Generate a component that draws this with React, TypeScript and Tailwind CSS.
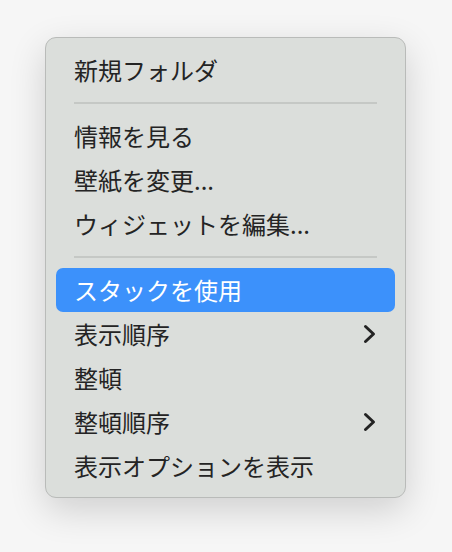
import React from 'react';

type Item =
  | { kind: 'item'; label: string; active?: boolean; submenu?: boolean }
  | { kind: 'sep' };

const items: Item[] = [
  { kind: 'item', label: '新規フォルダ' },
  { kind: 'sep' },
  { kind: 'item', label: '情報を見る' },
  { kind: 'item', label: '壁紙を変更...' },
  { kind: 'item', label: 'ウィジェットを編集...' },
  { kind: 'sep' },
  { kind: 'item', label: 'スタックを使用', active: true },
  { kind: 'item', label: '表示順序', submenu: true },
  { kind: 'item', label: '整頓' },
  { kind: 'item', label: '整頓順序', submenu: true },
  { kind: 'item', label: '表示オプションを表示' },
];

function Chevron() {
  return (
    <svg width="15" height="22" viewBox="0 0 15 22" fill="none">
      <path d="M3.5 3.5l8 7.5-8 7.5" stroke="#232323" strokeWidth="3" strokeLinecap="round" strokeLinejoin="round" />
    </svg>
  );
}

export default function App() {
  return (
    <div
      className="w-[452px] h-[552px] bg-[#f6f6f6] pt-[37px] pl-[45px]"
      style={{ fontFamily: '"Noto Sans CJK JP", "Noto Sans", sans-serif' }}
    >
      <div className="w-[361px] rounded-[11px] border border-[#b9bbb9] bg-[#dbdedb] px-[10px] pt-[10px] pb-[9px] shadow-[0_12px_36px_rgba(0,0,0,0.16)]">
        {items.map((it, i) =>
          it.kind === 'sep' ? (
            <div key={i} className="h-[22px] flex items-center px-[18px]">
              <div className="h-[2px] w-full bg-[#c5c8c5]" />
            </div>
          ) : (
            <div
              key={i}
              className={`h-[44px] flex items-center justify-between pl-[18px] pr-[18px] rounded-[7px] text-[24px] leading-none ${
                it.active ? 'bg-[#3c91fb] text-white' : 'text-[#242424]'
              }`}
            >
              <span>{it.label}</span>
              {it.submenu && <Chevron />}
            </div>
          )
        )}
      </div>
    </div>
  );
}
